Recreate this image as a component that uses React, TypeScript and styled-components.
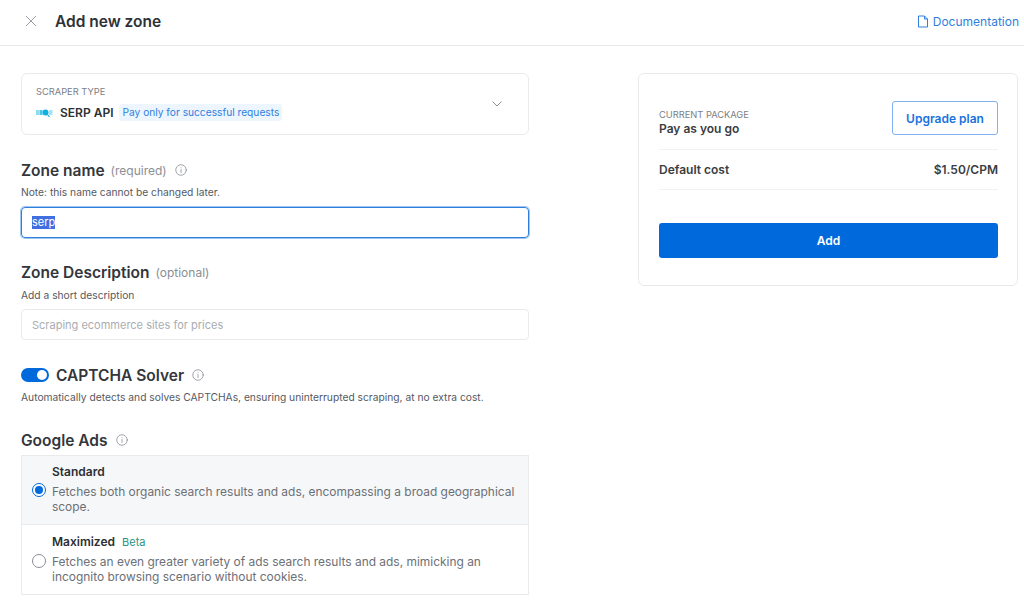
import React from 'react';
import styled, { createGlobalStyle } from 'styled-components';

const GlobalStyle = createGlobalStyle`
  html, body {
    margin: 0;
    padding: 0;
    height: 100%;
    overflow: hidden;
    background: #fff;
    font-family: 'Inter', 'Liberation Sans', sans-serif;
    color: #2c2f33;
  }
  * { box-sizing: border-box; }
`;

const Header = styled.header`
  height: 46px;
  border-bottom: 1px solid #e9eaec;
  display: flex;
  align-items: center;
  padding: 0 5px 3px 25px;
`;
const CloseButton = styled.span`
  display: flex;
  width: 12px;
  height: 12px;
  margin-right: 18px;
  color: #9a9ea5;
`;
const Title = styled.h1`
  margin: 0;
  flex: 1;
  font-size: 15.5px;
  font-weight: 600;
  color: #2e3136;
`;
const DocLink = styled.a`
  display: flex;
  align-items: center;
  gap: 4px;
  font-size: 12px;
  color: #2f7fdd;
`;
const Main = styled.main`
  display: flex;
  align-items: flex-start;
  padding: 27px 6px 0 21px;
  justify-content: space-between;
`;
const LeftColumn = styled.div`
  width: 508px;
`;
const TypeCard = styled.div`
  height: 62px;
  border: 1px solid #e9eaec;
  border-radius: 6px;
  padding: 12px 14px;
  position: relative;
`;
const SmallCaps = styled.div`
  font-size: 9.3px;
  line-height: 12px;
  color: #7c8087;
`;
const TypeRow = styled.div`
  display: flex;
  align-items: center;
  margin-top: 6px;
`;
const TypeName = styled.span`
  font-size: 12px;
  font-weight: 600;
  margin: 0 6px 0 7px;
  color: #2c2f33;
`;
const Pill = styled.span`
  background: #edf5ff;
  color: #2f7fdd;
  border-radius: 3px;
  font-size: 10.2px;
  line-height: 17px;
  padding: 0 3px;
`;
const Chevron = styled.span`
  position: absolute;
  right: 26px;
  top: 27px;
  display: flex;
  color: #8a8e95;
`;
const Section = styled.section<{ $top: number }>`
  margin-top: ${(p) => p.$top}px;
`;
const HeadingRow = styled.div`
  display: flex;
  align-items: center;
  height: 20px;
`;
const Heading = styled.h2`
  margin: 0;
  font-size: 15.5px;
  font-weight: 600;
  color: #33363b;
`;
const Hint = styled.span`
  font-size: 12px;
  color: #8a8e95;
  margin-left: 6px;
`;
const InfoMark = styled.span`
  display: flex;
  margin-left: 8px;
  color: #8a8e95;
`;
const Note = styled.p<{ $low?: boolean }>`
  margin: ${(p) => (p.$low ? '6px' : '5px')} 0 0;
  font-size: 10.25px;
  line-height: 14px;
  color: #55595f;
`;
const FieldBox = styled.div<{ $focus?: boolean }>`
  height: 31px;
  margin-top: ${(p) => (p.$focus ? 8 : 7)}px;
  border-radius: 4px;
  padding: 0 10px;
  display: flex;
  align-items: center;
  font-size: 11px;
  border: 1px solid ${(p) => (p.$focus ? '#2f7fdd' : '#e9eaec')};
  box-shadow: ${(p) => (p.$focus ? '0 0 0 1px #9fc5f3' : 'none')};
  color: #a9adb3;
`;
const Selected = styled.span`
  background: #3f6fe0;
  color: #fff;
  line-height: 13px;
`;
const Toggle = styled.span`
  width: 28px;
  height: 14px;
  border-radius: 7px;
  background: #006adc;
  margin-right: 7px;
  position: relative;
  &::after {
    content: '';
    position: absolute;
    right: 2px;
    top: 2px;
    width: 10px;
    height: 10px;
    border-radius: 50%;
    background: #fff;
  }
`;
const RadioList = styled.div`
  margin-top: 5px;
  border: 1px solid #e9eaec;
`;
const RadioRow = styled.div<{ $active?: boolean }>`
  height: 69px;
  background: ${(p) => (p.$active ? '#f6f7f9' : '#fff')};
  border-bottom: ${(p) => (p.$active ? '1px solid #e9eaec' : 'none')};
  padding: ${(p) => (p.$active ? '0 10px' : '2px 10px 0')};
  display: flex;
  align-items: center;
`;
const RadioDot = styled.span<{ $on?: boolean }>`
  flex: none;
  width: 14px;
  height: 14px;
  border-radius: 50%;
  border: 1px solid ${(p) => (p.$on ? '#006adc' : '#8a8e95')};
  background: #fff;
  margin-right: 6px;
  display: flex;
  align-items: center;
  justify-content: center;
  &::after {
    content: '';
    display: ${(p) => (p.$on ? 'block' : 'none')};
    width: 8px;
    height: 8px;
    border-radius: 50%;
    background: #006adc;
  }
`;
const RadioBody = styled.div`
  padding-bottom: 3px;
`;
const RadioTitle = styled.div`
  font-size: 12px;
  font-weight: 600;
  line-height: 16px;
  color: #2c2f33;
  display: flex;
  gap: 7px;
`;
const Beta = styled.span`
  font-weight: 400;
  color: #2a9383;
  font-size: 11px;
`;
const RadioText = styled.div`
  font-size: 11.95px;
  line-height: 15px;
  margin-top: 4px;
  color: #6c7077;
`;
const PackageCard = styled.aside`
  width: 380px;
  height: 213px;
  border: 1px solid #e9eaec;
  border-radius: 6px;
  padding: 27px 19px 27px 20px;
`;
const PackageRow = styled.div`
  display: flex;
  align-items: center;
  justify-content: space-between;
  height: 49px;
  padding-bottom: 14px;
  border-bottom: 1px solid #f0f1f2;
`;
const PackageInfo = styled.div`
  padding-top: 8px;
`;
const PackageName = styled.div`
  font-size: 12px;
  font-weight: 600;
  line-height: 15px;
  color: #3a3d42;
`;
const UpgradeButton = styled.button`
  width: 106px;
  height: 34px;
  background: #fff;
  border: 1px solid #7fb2ee;
  border-radius: 3px;
  font: 600 12px 'Inter', sans-serif;
  color: #1a72dc;
`;
const CostRow = styled.div`
  display: flex;
  justify-content: space-between;
  align-items: center;
  height: 40px;
  border-bottom: 1px solid #f0f1f2;
  font-size: 12px;
  font-weight: 600;
  color: #3a3d42;
`;
const AddButton = styled.button`
  display: block;
  width: 100%;
  height: 35px;
  margin-top: 33px;
  background: #006adc;
  border: none;
  border-radius: 3px;
  font: 600 12px 'Inter', sans-serif;
  color: #fff;
`;

function InfoIcon({ size = 12 }: { size?: number }) {
  return (
    <InfoMark>
      <svg width={size} height={size} viewBox="0 0 24 24" fill="none" stroke="currentColor" strokeWidth="1.6" strokeLinecap="round">
        <circle cx="12" cy="12" r="10.5" />
        <path d="M12 11v6M12 7.5v.2" />
      </svg>
    </InfoMark>
  );
}

function SerpLogo() {
  return (
    <svg width="17" height="10" viewBox="0 0 17 10">
      <rect x="0" y="2" width="3" height="5" fill="#8fdcf2" />
      <rect x="3.5" y="2" width="3" height="5" fill="#4cc6ea" />
      <circle cx="9.5" cy="4.5" r="3" fill="#0fb0e0" />
      <path d="M11.5 6.5l2 2.5" stroke="#0fb0e0" strokeWidth="1.2" />
      <rect x="13" y="2" width="3.5" height="5" fill="#a5e3f5" />
    </svg>
  );
}

export default function App() {
  return (
    <>
      <GlobalStyle />
      <Header>
        <CloseButton>
          <svg width="12" height="12" viewBox="0 0 12 12" stroke="currentColor" strokeWidth="1">
            <path d="M1 1l10 10M11 1L1 11" />
          </svg>
        </CloseButton>
        <Title>Add new zone</Title>
        <DocLink>
          <svg width="12" height="13" viewBox="0 0 12 13" fill="none" stroke="currentColor" strokeWidth="1" strokeLinejoin="round">
            <path d="M1.5 1h6l3 3v8h-9zM7.5 1v3h3" />
          </svg>
          Documentation
        </DocLink>
      </Header>
      <Main>
        <LeftColumn>
          <TypeCard>
            <SmallCaps>SCRAPER TYPE</SmallCaps>
            <TypeRow>
              <SerpLogo />
              <TypeName>SERP API</TypeName>
              <Pill>Pay only for successful requests</Pill>
            </TypeRow>
            <Chevron>
              <svg width="10" height="6" viewBox="0 0 10 6" fill="none" stroke="currentColor" strokeWidth="1">
                <path d="M.5.5L5 5 9.5.5" />
              </svg>
            </Chevron>
          </TypeCard>

          <Section $top={25}>
            <HeadingRow>
              <Heading>Zone name</Heading>
              <Hint>(required)</Hint>
              <InfoIcon />
            </HeadingRow>
            <Note>Note: this name cannot be changed later.</Note>
            <FieldBox $focus>
              <Selected>serp</Selected>
            </FieldBox>
          </Section>

          <Section $top={24}>
            <HeadingRow>
              <Heading>Zone Description</Heading>
              <Hint>(optional)</Hint>
            </HeadingRow>
            <Note $low>Add a short description</Note>
            <FieldBox>Scraping ecommerce sites for prices</FieldBox>
          </Section>

          <Section $top={25}>
            <HeadingRow>
              <Toggle />
              <Heading>CAPTCHA Solver</Heading>
              <InfoIcon />
            </HeadingRow>
            <Note>Automatically detects and solves CAPTCHAs, ensuring uninterrupted scraping, at no extra cost.</Note>
          </Section>

          <Section $top={26}>
            <HeadingRow>
              <Heading>Google Ads</Heading>
              <InfoIcon />
            </HeadingRow>
            <RadioList>
              <RadioRow $active>
                <RadioDot $on />
                <RadioBody>
                  <RadioTitle>Standard</RadioTitle>
                  <RadioText>Fetches both organic search results and ads, encompassing a broad geographical scope.</RadioText>
                </RadioBody>
              </RadioRow>
              <RadioRow>
                <RadioDot />
                <RadioBody>
                  <RadioTitle>
                    Maximized <Beta>Beta</Beta>
                  </RadioTitle>
                  <RadioText>Fetches an even greater variety of ads search results and ads, mimicking an incognito browsing scenario without cookies.</RadioText>
                </RadioBody>
              </RadioRow>
            </RadioList>
          </Section>
        </LeftColumn>

        <PackageCard>
          <PackageRow>
            <PackageInfo>
              <SmallCaps>CURRENT PACKAGE</SmallCaps>
              <PackageName>Pay as you go</PackageName>
            </PackageInfo>
            <UpgradeButton>Upgrade plan</UpgradeButton>
          </PackageRow>
          <CostRow>
            <span>Default cost</span>
            <span>$1.50/CPM</span>
          </CostRow>
          <AddButton>Add</AddButton>
        </PackageCard>
      </Main>
    </>
  );
}
